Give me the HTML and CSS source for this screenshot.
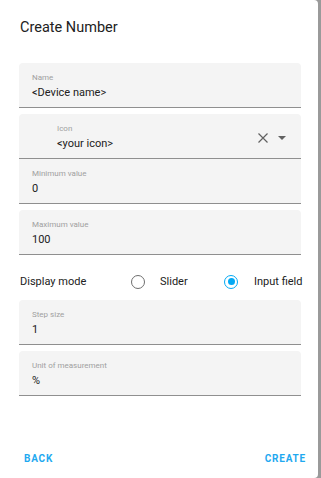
FILE: index.html
```html
<!DOCTYPE html>
<html>
<head>
<meta charset="utf-8">
<link rel="stylesheet" href="styles.css">
</head>
<body>
<div class="dialog">
  <h2 class="title">Create Number</h2>
  <div class="form">
    <div class="field">
      <div class="label">Name</div>
      <div class="value">&lt;Device name&gt;</div>
    </div>
    <div class="field icon-field">
      <div class="icon-text">
        <div class="label">Icon</div>
        <div class="value">&lt;your icon&gt;</div>
      </div>
      <svg class="clear" width="12" height="12" viewBox="0 0 12 12"><path d="M1.5 1.5 L10.5 10.5 M10.5 1.5 L1.5 10.5" stroke="#616161" stroke-width="1.2" fill="none"/></svg>
      <svg class="arrow" width="10" height="6" viewBox="0 0 10 6"><path d="M1 1 H9 L5 5 Z" fill="#616161"/></svg>
    </div>
    <div class="field flush">
      <div class="label">Minimum value</div>
      <div class="value">0</div>
    </div>
    <div class="field">
      <div class="label">Maximum value</div>
      <div class="value">100</div>
    </div>
    <div class="mode-row">
      <span class="mode-label">Display mode</span>
      <span class="radio"></span>
      <span class="radio-label">Slider</span>
      <span class="radio checked"></span>
      <span class="radio-label last">Input field</span>
    </div>
    <div class="field flush-top">
      <div class="label">Step size</div>
      <div class="value">1</div>
    </div>
    <div class="field">
      <div class="label">Unit of measurement</div>
      <div class="value">%</div>
    </div>
  </div>
  <div class="actions">
    <span class="btn">BACK</span>
    <span class="btn">CREATE</span>
  </div>
</div>
</body>
</html>
```
FILE: styles.css
```css
html, body {
  margin: 0;
  padding: 0;
}
body {
  width: 321px;
  height: 478px;
  background: #9a9a9a;
  font-family: Roboto, "Liberation Sans", sans-serif;
  overflow: hidden;
}
.dialog {
  width: 318px;
  height: 478px;
  background: #fff;
  border-radius: 0 4px 4px 0;
  box-sizing: border-box;
  padding: 0 17px 0 19px;
  display: flex;
  flex-direction: column;
}
.title {
  margin: 0;
  padding: 18px 0 0 1px;
  height: 20px;
  line-height: 20px;
  font-size: 14.5px;
  font-weight: 400;
  color: #212121;
}
.form {
  margin-top: 25px;
  display: flex;
  flex-direction: column;
}
.field {
  background: #f4f4f4;
  border-radius: 4px 4px 0 0;
  border-bottom: 1px solid #8f8f8f;
  height: 44px;
  flex: none;
  box-sizing: content-box;
  padding-left: 13px;
  margin-top: 6px;
  display: flex;
  flex-direction: column;
  justify-content: flex-start;
}
.form > .field:first-child {
  margin-top: 0;
}
.field.flush {
  margin-top: 0;
  border-radius: 0;
}
.field.flush-top {
  margin-top: 0;
}
.label {
  font-size: 8px;
  line-height: 10px;
  color: #a0a0a0;
  margin-top: 10px;
}
.value {
  font-size: 11px;
  line-height: 14px;
  color: #212121;
  margin-top: 3px;
}
.icon-field {
  flex-direction: row;
  align-items: flex-start;
  padding-left: 38px;
}
.icon-text {
  flex: 1;
  display: flex;
  flex-direction: column;
}
.clear {
  margin-top: 18px;
  margin-right: 8px;
}
.arrow {
  margin-top: 21px;
  margin-right: 14px;
}
.mode-row {
  height: 45px;
  box-sizing: border-box;
  padding-top: 8px;
  flex: none;
  display: flex;
  align-items: center;
  font-size: 11px;
  color: #212121;
  white-space: nowrap;
}
.mode-label {
  margin-left: 1px;
  width: 111px;
  flex: none;
}
.radio {
  flex: none;
  width: 12px;
  height: 12px;
  border: 1.5px solid #6e6e6e;
  border-radius: 50%;
  box-sizing: content-box;
  position: relative;
}
.radio.checked {
  border-color: #03a9f4;
}
.radio.checked::after {
  content: "";
  position: absolute;
  left: 2.5px;
  top: 2.5px;
  width: 7px;
  height: 7px;
  border-radius: 50%;
  background: #03a9f4;
}
.radio-label {
  flex: none;
  margin-left: 15px;
  width: 64px;
}
.radio-label.last {
  width: auto;
  margin-left: 16px;
}
.actions {
  margin-top: auto;
  margin-right: -5px;
  height: 25px;
  flex: none;
  display: flex;
  justify-content: space-between;
  align-items: flex-start;
  padding: 0 0 0 5px;
}
.btn {
  font-size: 10px;
  font-weight: 700;
  letter-spacing: 0.8px;
  color: #1fa9f0;
  line-height: 12px;
}
```
